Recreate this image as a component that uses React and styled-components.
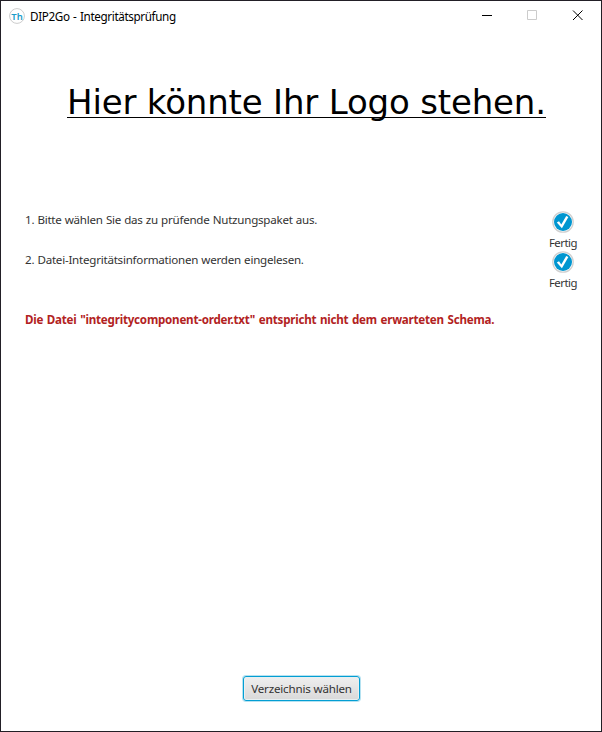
import React from "react";
import styled, { createGlobalStyle } from "styled-components";

const GlobalStyle = createGlobalStyle`
  *, *::before, *::after { box-sizing: border-box; }
  body { margin: 0; background: #fff; }
`;

const Window = styled.div`
  display: flex;
  flex-direction: column;
  width: 602px;
  height: 732px;
  border: 1px solid #221f26;
  background: #fff;
  color: #333;
  font-family: "Noto Sans", "Open Sans", sans-serif;
  font-size: 11.6px;
  line-height: 16px;
  white-space: nowrap;
`;

const TitleBar = styled.header`
  display: flex;
  align-items: center;
  flex: none;
  height: 29px;
  padding-left: 8px;
  color: #000;
`;

const AppIcon = styled.svg`
  flex: none;
  width: 16px;
  height: 16px;
  margin-right: 5px;
`;

const Title = styled.h1`
  flex: 1;
  margin: 1px 0 0;
  font-size: 11.7px;
  font-weight: 400;
  word-spacing: 0.8px;
  letter-spacing: ${(p) => p.$spacing}px;
`;

const WindowButton = styled.button`
  display: flex;
  justify-content: center;
  align-items: center;
  width: 45px;
  height: 29px;
  padding: 0;
  border: 0;
  background: none;
  color: ${(p) => (p.disabled ? "#ccc" : "#000")};
`;

const ControlIcon = styled.svg`
  width: 11px;
  height: 11px;
  fill: none;
  stroke: currentColor;
`;

const Controls = styled.div`
  display: flex;
  margin-right: 1px;
`;

const LogoText = styled.div`
  flex: none;
  height: 179px;
  padding: 52px 0 0 66px;
  color: #000;
  font-family: "DejaVu Sans", sans-serif;
  font-size: 34px;
  line-height: 40px;
  letter-spacing: ${(p) => p.$spacing}px;
`;

const Underlined = styled.span`
  display: inline-block;
  height: 36px;
  width: 479px;
  border-bottom: 1px solid #000;
`;

const Steps = styled.ol`
  flex: none;
  margin: 0;
  padding: 0 24px;
  list-style: none;
`;

const Step = styled.li`
  display: flex;
  justify-content: space-between;
  height: 40px;
`;

const StepText = styled.span`
  padding-top: 3px;
  word-spacing: 0.4px;
  letter-spacing: ${(p) => p.$spacing}px;
`;

const Status = styled.div`
  display: flex;
  flex-direction: column;
  align-items: center;
  width: 28px;
  padding-top: 2px;
`;

const StatusIcon = styled.svg`
  flex: none;
  width: 22px;
  height: 22px;
`;

const StatusText = styled.span`
  margin-top: 2px;
  font-size: 11.4px;
  letter-spacing: ${(p) => p.$spacing}px;
`;

const ErrorMessage = styled.p`
  flex: 1;
  margin: 0;
  padding: 23px 24px 0;
  color: #b22222;
  font-weight: 700;
  word-spacing: 0.8px;
  letter-spacing: ${(p) => p.$spacing}px;
`;

const Footer = styled.footer`
  display: flex;
  justify-content: center;
  flex: none;
  height: 55px;
`;

const ActionButton = styled.button`
  width: 117px;
  height: 25px;
  margin-left: 1px;
  padding: 0;
  border: 1px solid #039ed3;
  border-radius: 3px;
  background: linear-gradient(#efefef, #d9d9d9);
  box-shadow: 0 0 0 1px #b5e2f1, inset 0 0 0 1px #e8f0f2;
  color: #333;
  font: inherit;
  letter-spacing: ${(p) => p.$spacing}px;
`;

function DoneIcon() {
  return (
    <StatusIcon viewBox="0 0 22 22" aria-hidden="true">
      <circle cx="11" cy="11" r="10.2" fill="#fff" stroke="#d0d0d0" strokeWidth="1.3" />
      <circle cx="11" cy="11" r="9" fill="#0096d0" />
      <path d="M4.8 11.5 L7 10.2 L9.3 13.4 L14.2 4.9 L16.4 6 L9.9 17.3 Z" fill="#fff" />
    </StatusIcon>
  );
}

const steps = [
  { text: "1. Bitte wählen Sie das zu prüfende Nutzungspaket aus.", spacing: -0.25 },
  { text: "2. Datei-Integritätsinformationen werden eingelesen.", spacing: -0.24 },
];

export default function App() {
  return (
    <Window>
      <GlobalStyle />
      <TitleBar>
        <AppIcon viewBox="0 0 16 16" aria-hidden="true">
          <circle cx="8" cy="8" r="7.4" fill="#fff" stroke="#ccc" />
          <text x="8.1" y="11.5" textAnchor="middle" fontFamily="Noto Sans, sans-serif" fontSize="9.5" fontWeight="600" fill="#1c9cc8">Th</text>
        </AppIcon>
        <Title $spacing={-0.37}>DIP2Go - Integritätsprüfung</Title>
        <Controls>
          <WindowButton aria-label="Minimieren">
            <ControlIcon viewBox="0 0 11 11"><path d="M0 5.5H10" /></ControlIcon>
          </WindowButton>
          <WindowButton aria-label="Maximieren" disabled>
            <ControlIcon viewBox="0 0 11 11"><path d="M.5 .5H9.5V9.5H.5Z" /></ControlIcon>
          </WindowButton>
          <WindowButton aria-label="Schließen">
            <ControlIcon viewBox="0 0 11 11"><path d="M1 .5L10.5 10M10.5 .5L1 10" /></ControlIcon>
          </WindowButton>
        </Controls>
      </TitleBar>
      <LogoText $spacing={-0.17}>
        <Underlined>Hier könnte Ihr Logo stehen.</Underlined>
      </LogoText>
      <Steps>
        {steps.map((s) => (
          <Step key={s.text}>
            <StepText $spacing={s.spacing}>{s.text}</StepText>
            <Status>
              <DoneIcon />
              <StatusText $spacing={-0.5}>Fertig</StatusText>
            </Status>
          </Step>
        ))}
      </Steps>
      <ErrorMessage $spacing={-0.22}>
        Die Datei "integritycomponent-order.txt" entspricht nicht dem erwarteten Schema.
      </ErrorMessage>
      <Footer>
        <ActionButton $spacing={-0.18}>Verzeichnis wählen</ActionButton>
      </Footer>
    </Window>
  );
}
